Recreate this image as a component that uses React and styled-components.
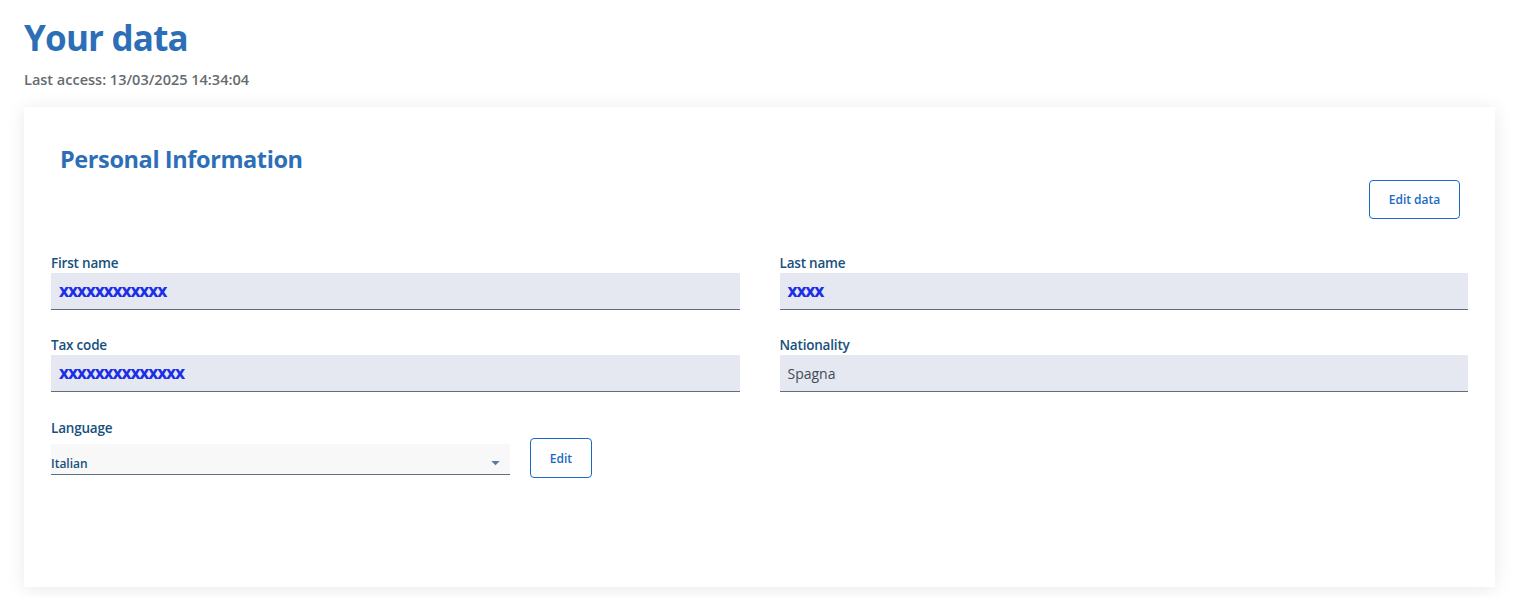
import React from 'react'
import styled, { createGlobalStyle } from 'styled-components'

const GlobalStyle = createGlobalStyle`
    body{
        margin: 0;
        background: #fff;
        font-family: "Open Sans", "Noto Sans", sans-serif;
    }
`;

function Field({ label, value, masked }) {
    return (
        <FieldBox>
            <Label>{label}</Label>
            <Input>
                <Value masked={masked}>{value}</Value>
            </Input>
        </FieldBox>
    )
}

function App() {
    return (
        <Page>
            <GlobalStyle />
            <Title>Your data</Title>
            <LastAccess>Last access: 13/03/2025 14:34:04</LastAccess>

            <Card>
                <CardTitle>Personal Information</CardTitle>
                <ActionRow>
                    <OutlineButton wide>Edit data</OutlineButton>
                </ActionRow>

                <Grid>
                    <Field label="First name" value="XXXXXXXXXXXX" masked />
                    <Field label="Last name" value="XXXX" masked />
                    <Field label="Tax code" value="XXXXXXXXXXXXXX" masked />
                    <Field label="Nationality" value="Spagna" />
                </Grid>

                <LanguageRow>
                    <SelectBox>
                        <Label>Language</Label>
                        <Select>
                            <span>Italian</span>
                            <svg width="9" height="5" viewBox="0 0 10 6">
                                <path d="M0 0 L10 0 L5 5 Z" fill="#5c7a99" />
                            </svg>
                        </Select>
                    </SelectBox>
                    <OutlineButton>Edit</OutlineButton>
                </LanguageRow>
            </Card>
        </Page>
    )
}

const Page = styled.div`
    padding: 15px 20px 10px 24px;
`;

const Title = styled.h1`
    margin: 0;
    font-size: 35px;
    line-height: 46px;
    font-weight: 700;
    color: #2c6fb7;
    letter-spacing: -0.8px;
`;

const LastAccess = styled.div`
    margin-top: 10px;
    font-size: 14.5px;
    line-height: 18px;
    font-weight: 600;
    color: #666b70;
    letter-spacing: 0;
`;

const Card = styled.div`
    margin-top: 18px;
    background: #fff;
    box-shadow: 0 2px 18px rgba(0, 0, 0, 0.09);
    padding: 36px 27px 108px 27px;
    min-height: 480px;
    box-sizing: border-box;
`;

const CardTitle = styled.h2`
    margin: 0 0 0 9px;
    font-size: 23.5px;
    line-height: 32px;
    font-weight: 700;
    color: #2c6fb7;
    letter-spacing: -0.4px;
`;

const ActionRow = styled.div`
    display: flex;
    justify-content: flex-end;
    margin-top: 5px;
    padding-right: 8px;
`;

const OutlineButton = styled.button`
    background: #fff;
    border: 1.5px solid #1a6ac4;
    border-radius: 4px;
    color: #1a6ac4;
    font-family: inherit;
    font-weight: 600;
    font-size: 12px;
    height: ${p => p.wide ? '39px' : '40px'};
    width: ${p => p.wide ? '91px' : '62px'};
    margin-top: ${p => p.wide ? '0' : '18px'};
    padding: 0;
    cursor: pointer;
`;

const Grid = styled.div`
    display: grid;
    grid-template-columns: 1fr 1fr;
    column-gap: 40px;
    row-gap: 27px;
    margin-top: 36px;
`;

const FieldBox = styled.div`
    display: flex;
    flex-direction: column;
`;

const Label = styled.div`
    font-size: 13.5px;
    font-weight: 600;
    color: #17507d;
    line-height: 16px;
    margin-bottom: 2px;
    letter-spacing: -0.2px;
`;

const Input = styled.div`
    height: 37px;
    background: #e5e8f1;
    border-bottom: 1px solid #5c6f82;
    display: flex;
    align-items: center;
    padding-left: 8px;
    box-sizing: border-box;
`;

const Value = styled.span`
    font-size: 14px;
    color: ${p => p.masked ? '#1c2fe6' : '#404b57'};
    font-weight: ${p => p.masked ? 800 : 400};
    letter-spacing: ${p => p.masked ? '-1.2px' : '0'};
`;

const LanguageRow = styled.div`
    display: flex;
    align-items: flex-start;
    gap: 20px;
    margin-top: 28px;
`;

const SelectBox = styled.div`
    width: 459px;
    display: flex;
    flex-direction: column;
`;

const Select = styled.div`
    margin-top: 6px;
    height: 31px;
    background: #f8f8f8;
    border-bottom: 1px solid #5c6f82;
    display: flex;
    align-items: flex-end;
    justify-content: space-between;
    padding: 0 10px 2px 0;
    box-sizing: border-box;
    font-size: 12px;
    font-weight: 600;
    color: #17507d;

    svg{
        margin-bottom: 6px;
    }
`;

export default App
